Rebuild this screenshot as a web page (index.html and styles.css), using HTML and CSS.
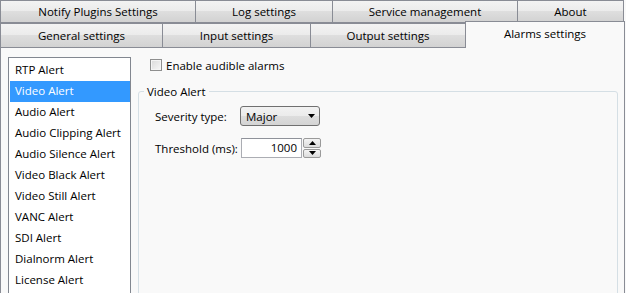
FILE: index.html
```html
<!DOCTYPE html>
<html>
<head>
<meta charset="utf-8">
<link rel="stylesheet" href="styles.css">
</head>
<body>
<div class="window">
  <div class="tabrow row1">
    <div class="tab w-notify">Notify Plugins Settings</div>
    <div class="tab w-log">Log settings</div>
    <div class="tab w-service">Service management</div>
    <div class="tab w-about">About</div>
  </div>
  <div class="tabrow row2">
    <div class="tab w-general">General settings</div>
    <div class="tab w-input">Input settings</div>
    <div class="tab w-output">Output settings</div>
    <div class="tab selected w-alarms">Alarms settings</div>
  </div>
  <div class="panel">
    <ul class="alerts">
      <li>RTP Alert</li>
      <li class="active">Video Alert</li>
      <li>Audio Alert</li>
      <li>Audio Clipping Alert</li>
      <li>Audio Silence Alert</li>
      <li>Video Black Alert</li>
      <li>Video Still Alert</li>
      <li>VANC Alert</li>
      <li>SDI Alert</li>
      <li>Dialnorm Alert</li>
      <li>License Alert</li>
    </ul>
    <div class="settings">
      <label class="check"><span class="box"></span><span>Enable audible alarms</span></label>
      <fieldset class="group">
        <legend>Video Alert</legend>
        <div class="form">
          <span class="lbl">Severity type:</span>
          <div class="combo">
            <span>Major</span>
            <svg class="arrow" width="7" height="4" viewBox="0 0 7 4"><path d="M0 0H7L3.5 4Z" fill="#000"/></svg>
          </div>
          <span class="lbl">Threshold (ms):</span>
          <div class="spin">
            <div class="spin-input">1000</div>
            <div class="spin-btns">
              <div class="sb"><svg width="7" height="4" viewBox="0 0 7 4"><path d="M0 4H7L3.5 0Z" fill="#000"/></svg></div>
              <div class="sb"><svg width="7" height="4" viewBox="0 0 7 4"><path d="M0 0H7L3.5 4Z" fill="#000"/></svg></div>
            </div>
          </div>
        </div>
      </fieldset>
    </div>
  </div>
</div>
</body>
</html>
```
FILE: styles.css
```css
html, body {
  margin: 0;
  padding: 0;
  background: #f9f9f9;
  overflow: hidden;
}
body {
  font-family: "Open Sans", "Noto Sans", sans-serif;
  font-size: 11.5px;
  color: #000;
  width: 626px;
  height: 293px;
}
.window {
  width: 625px;
}
.tabrow {
  display: flex;
  height: 23px;
}
.row2 {
  height: 24px;
  align-items: flex-end;
}
.tab {
  box-sizing: border-box;
  border: 1px solid #898c95;
  background: linear-gradient(#f3f3f3 0%, #ebebeb 50%, #dedede 50%, #d2d2d2 100%);
  display: flex;
  align-items: center;
  justify-content: center;
  height: 23px;
  margin-left: -1px;
  white-space: nowrap;
}
.tab:first-child { margin-left: 0; }
.row2 .tab {
  height: 24px;
  border-bottom: none;
}
.row2 .tab.selected {
  height: 27px;
  margin-bottom: -1px;
  background: #f9f9f9;
  position: relative;
  z-index: 1;
  padding-bottom: 3px;
}
.w-notify { width: 196px; }
.w-log { width: 138px; }
.w-service { width: 186px; }
.w-about { width: 107px; }
.w-general { width: 163px; }
.w-input { width: 149px; }
.w-output { width: 156px; }
.w-alarms { width: 160px; }

.panel {
  box-sizing: border-box;
  width: 625px;
  height: 246px;
  overflow: hidden;
  border: 1px solid #898c95;
  border-bottom: none;
  background: #f9f9f9;
  display: flex;
  align-items: flex-start;
}
.alerts {
  list-style: none;
  margin: 9px 0 0 7px;
  padding: 2px 0 0 1px;
  width: 123px;
  box-sizing: border-box;
  height: 260px;
  border: 1px solid #828790;
  background: #fff;
  flex-shrink: 0;
}
.alerts li {
  height: 21px;
  line-height: 20px;
  padding-left: 5px;
  white-space: nowrap;
}
.alerts li.active {
  background: #3399ff;
  color: #fff;
}
.settings {
  flex: 1;
  padding: 0 6px 0 7px;
  display: flex;
  flex-direction: column;
}
.check {
  display: flex;
  align-items: center;
  gap: 4px;
  height: 16px;
  margin-top: 9px;
  padding-left: 12px;
}
.box {
  box-sizing: border-box;
  width: 12px;
  height: 12px;
  border: 1px solid #8e8f8f;
  background: linear-gradient(135deg, #d9d9d9, #f7f7f7);
  box-shadow: inset 0 0 0 1px #f4f4f4;
}
.group {
  margin: 10px 0 0 0;
  padding: 6px 0 0 16px;
  border: 1px solid #d5dfe5;
  border-radius: 3px;
  height: 240px;
  min-width: 0;
}
.group legend {
  margin-left: -11px;
  padding: 0 3px;
  line-height: 17px;
}
.form {
  display: grid;
  grid-template-columns: 85px 80px;
  grid-auto-rows: 20px;
  row-gap: 12px;
  align-items: center;
}
.combo {
  box-sizing: border-box;
  height: 20px;
  width: 80px;
  border: 1px solid #707070;
  border-radius: 3px;
  background: linear-gradient(#f2f2f2 0%, #ebebeb 50%, #dddddd 50%, #d4d4d4 100%);
  display: flex;
  align-items: center;
  justify-content: space-between;
  padding: 0 4px 0 5px;
}
.spin {
  display: flex;
  height: 20px;
  width: 80px;
  margin-left: 1px;
}
.spin-input {
  box-sizing: border-box;
  width: 61px;
  height: 20px;
  border: 1px solid #abadb3;
  border-top-color: #8f929a;
  background: #fff;
  text-align: right;
  padding-right: 4px;
  line-height: 18px;
}
.spin-btns {
  margin-left: 1px;
  width: 18px;
  display: flex;
  flex-direction: column;
  gap: 1px;
}
.sb {
  box-sizing: border-box;
  flex: 1;
  border: 1px solid #9a9a9a;
  border-radius: 2px;
  background: linear-gradient(#f4f4f4, #dcdcdc);
  display: flex;
  align-items: center;
  justify-content: center;
}
```
